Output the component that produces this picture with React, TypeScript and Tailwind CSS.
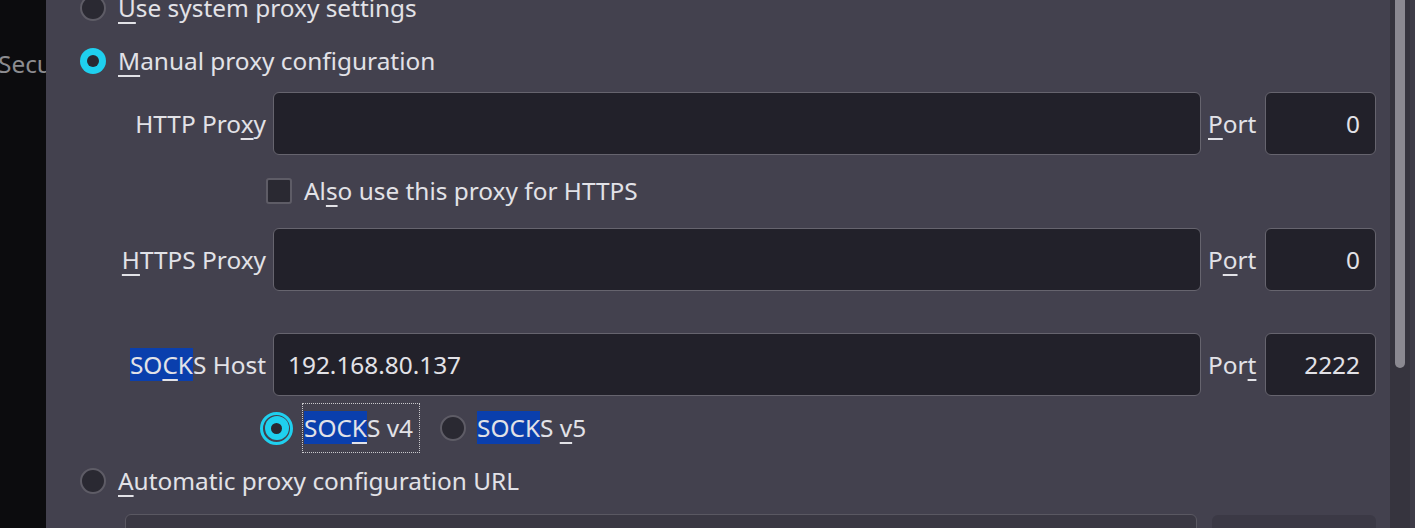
import React from 'react';

const u = 'underline decoration-2 underline-offset-[5px]';

function Radio({ checked, focus }: { checked?: boolean; focus?: boolean }) {
  if (checked && focus) {
    return (
      <span className="flex h-[33px] w-[33px] shrink-0 items-center justify-center rounded-full border-[3px] border-[#1fd0ef]">
        <span className="flex h-[24px] w-[24px] items-center justify-center rounded-full bg-[#1fd0ef]">
          <span className="h-[11px] w-[11px] rounded-full bg-[#292831]" />
        </span>
      </span>
    );
  }
  if (checked) {
    return (
      <span className="flex h-[26px] w-[26px] shrink-0 items-center justify-center rounded-full bg-[#1fd0ef]">
        <span className="h-[12px] w-[12px] rounded-full bg-[#292831]" />
      </span>
    );
  }
  return <span className="block h-[26px] w-[26px] shrink-0 rounded-full border-2 border-[#5e5c66] bg-[#2a2932]" />;
}

function Hl({ children }: { children: React.ReactNode }) {
  return <span className="bg-[#0a3fad]">{children}</span>;
}

function Field({ value }: { value?: string }) {
  return (
    <div className="flex h-[63px] flex-1 items-center rounded-[6px] border border-[#66646e] bg-[#22212a] px-[14px]">
      {value}
    </div>
  );
}

function PortField({ value, label }: { value: string; label: React.ReactNode }) {
  return (
    <>
      <span className="ml-[7px] w-[51px] text-left">{label}</span>
      <div className="ml-[6px] flex h-[63px] w-[111px] items-center justify-end rounded-[6px] border border-[#66646e] bg-[#22212a] pr-[15px]">
        {value}
      </div>
    </>
  );
}

export default function App() {
  return (
    <div
      className="flex h-[528px] w-[1415px] overflow-hidden bg-[#0c0c0e] text-[24.4px] leading-[34px] text-[#e2e2e7]"
      style={{ fontFamily: '"Noto Sans", "Open Sans", sans-serif' }}
    >
      <div className="w-[46px] shrink-0 overflow-hidden pt-[47px] text-[#8c8c90] whitespace-nowrap">
        <span className="ml-[-2px]">Security</span>
      </div>

      <div className="flex flex-1 overflow-hidden bg-[#43414e]">
        <div className="flex flex-1 flex-col pl-[34px] pr-[14px] mt-[-18px] whitespace-nowrap">
          <div className="flex h-[52px] shrink-0 items-center gap-[12px]">
            <Radio />
            <span><span className={u}>U</span>se system proxy settings</span>
          </div>

          <div className="flex h-[54px] shrink-0 items-center gap-[12px]">
            <Radio checked />
            <span><span className={u}>M</span>anual proxy configuration</span>
          </div>

          <div className="mt-[4px] flex h-[63px] shrink-0 items-center">
            <span className="w-[193px] pr-[7px] text-right">HTTP Pro<span className={u}>x</span>y</span>
            <Field />
            <PortField value="0" label={<><span className={u}>P</span>ort</>} />
          </div>

          <div className="flex h-[72px] shrink-0 items-center gap-[12px] pl-[186px]">
            <span className="h-[26px] w-[26px] rounded-[3px] border-2 border-[#5e5c66] bg-[#2a2932]" />
            <span>Al<span className={u}>s</span>o use this proxy for HTTPS</span>
          </div>

          <div className="mt-[1px] flex h-[63px] shrink-0 items-center">
            <span className="w-[193px] pr-[7px] text-right"><span className={u}>H</span>TTPS Proxy</span>
            <Field />
            <PortField value="0" label={<>P<span className={u}>o</span>rt</>} />
          </div>

          <div className="mt-[42px] flex h-[63px] shrink-0 items-center">
            <span className="w-[193px] pr-[7px] text-right">
              <Hl>SO<span className={u}>C</span>K</Hl>S Host
            </span>
            <Field value="192.168.80.137" />
            <PortField value="2222" label={<>Por<span className={u}>t</span></>} />
          </div>

          <div className="flex h-[64px] shrink-0 items-center pl-[180px]">
            <Radio checked focus />
            <span className="ml-[9px] border border-dotted border-[#c9c9cc] pl-[1px] pr-[6px] py-[7px]">
              <Hl>SOC<span className={u}>K</span></Hl>S v4
            </span>
            <span className="ml-[20px] flex"><Radio /></span>
            <span className="ml-[11px]">
              <Hl>SOCK</Hl>S <span className={u}>v</span>5
            </span>
          </div>

          <div className="flex h-[42px] shrink-0 items-center gap-[12px]">
            <Radio />
            <span><span className={u}>A</span>utomatic proxy configuration URL</span>
          </div>

          <div className="mt-[12px] flex shrink-0 gap-[15px] pl-[45px]">
            <div className="h-[60px] flex-1 rounded-[6px] border border-[#5a5862] bg-[#3a3843]" />
            <div className="mt-[1px] h-[60px] w-[164px] rounded-[6px] bg-[#3b3945]" />
          </div>
        </div>

        <div className="flex w-[25px] shrink-0 bg-[#36343e]">
          <div className="ml-[5px] h-[368px] w-[10px] rounded-b-[5px] bg-[#8b8991]" />
          <div className="ml-auto w-[5px] bg-[#3e3c48]" />
        </div>
      </div>
    </div>
  );
}
